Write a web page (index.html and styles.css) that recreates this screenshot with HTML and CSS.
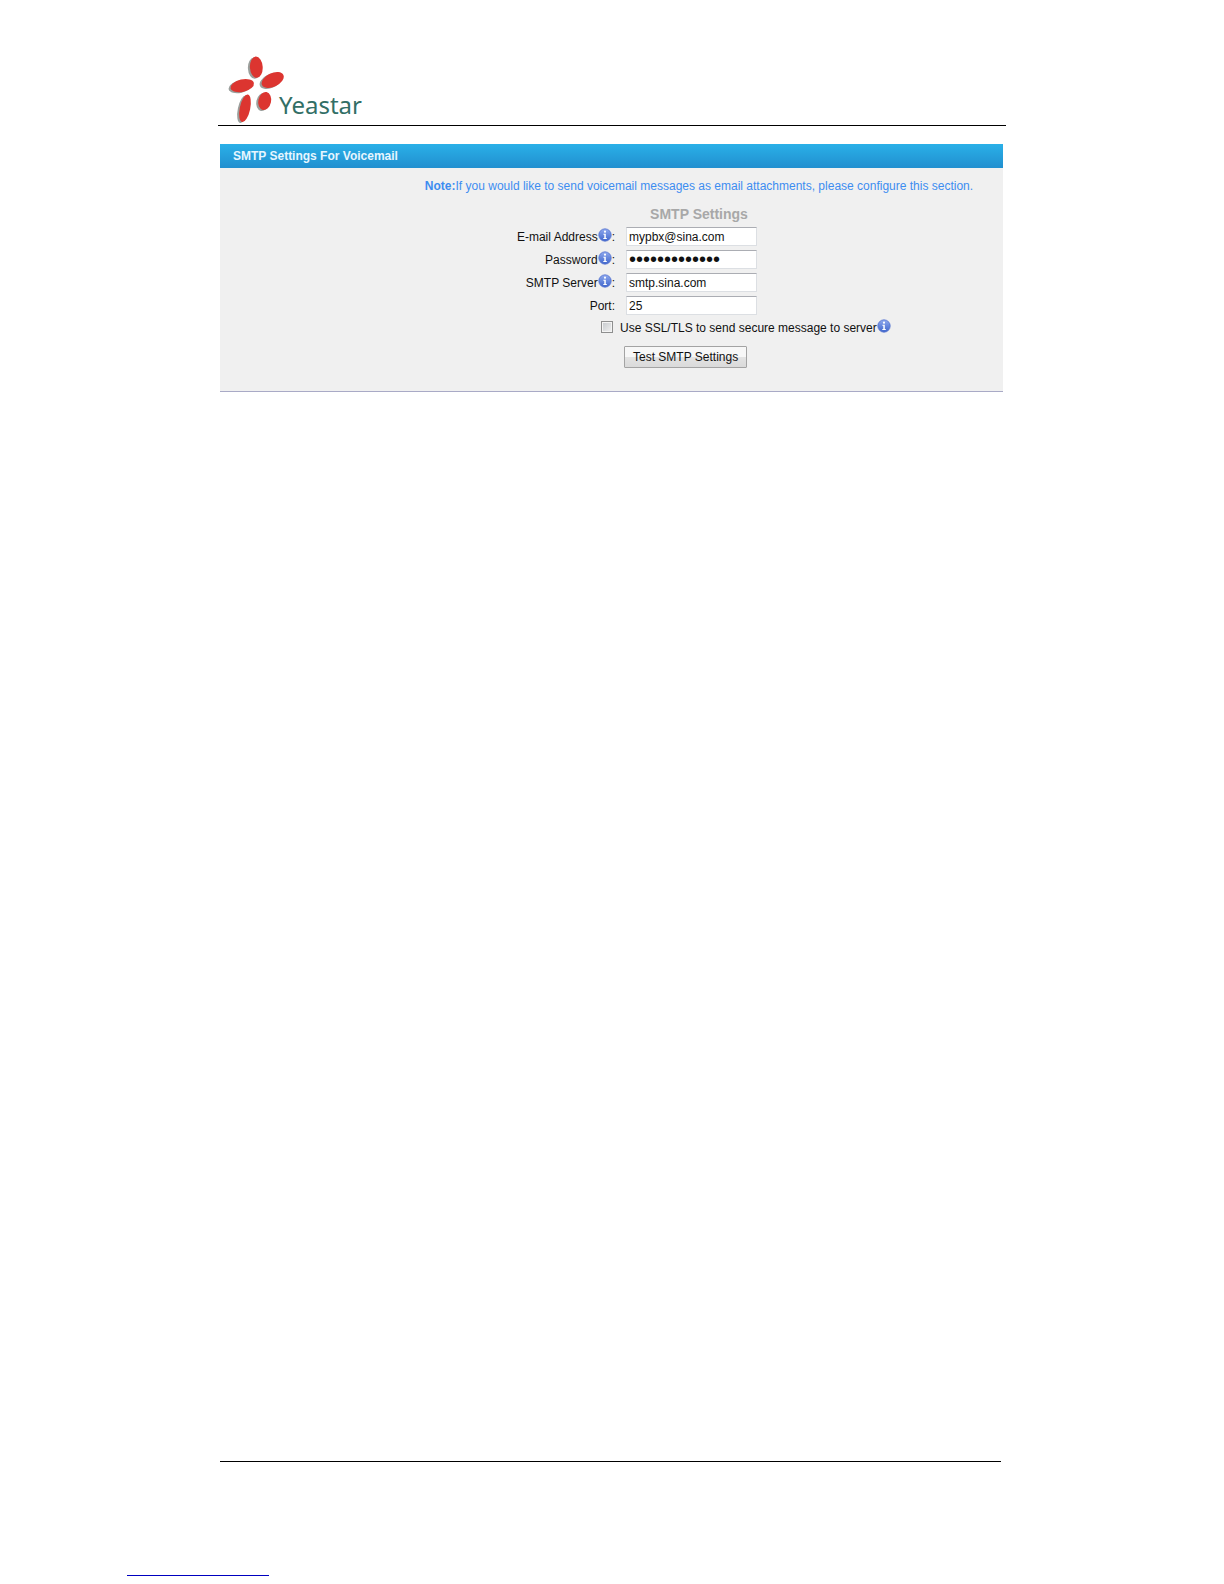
FILE: index.html
```
<!DOCTYPE html>
<html lang="en">
    <head>
        <meta charset="UTF-8">
        <title>SMTP Settings For Voicemail</title>
        <link rel="stylesheet" href="styles.css">
    </head>
    <body>
        <svg width="0" height="0" class="defs">
            <defs>
                <linearGradient id="infoFill" x1="0" y1="0" x2="0" y2="1">
                    <stop offset="0" stop-color="#8fa9ee"/>
                    <stop offset="1" stop-color="#3f66cc"/>
                </linearGradient>
                <symbol id="info" viewBox="0 0 14 14">
                    <circle cx="7" cy="7" r="6.2" fill="url(#infoFill)" stroke="#5875cf" stroke-width="0.8"/>
                    <circle cx="7" cy="3.7" r="1.1" fill="#fff"/>
                    <path d="M5.4 5.8h2.4v4.1h1v1H5.3v-1h1V6.8h-.9z" fill="#fff"/>
                </symbol>
                <g id="petals">
                    <ellipse cx="28.3" cy="12.2" rx="6.4" ry="10.6" transform="rotate(-3 28.3 12.2)"/>
                    <ellipse cx="14.3" cy="30.6" rx="11.9" ry="6.2" transform="rotate(-13 14.3 30.6)"/>
                    <ellipse cx="44.7" cy="25" rx="11.8" ry="6.8" transform="rotate(-25 44.7 25)"/>
                    <ellipse cx="17" cy="53.3" rx="5.2" ry="14" transform="rotate(12 17 53.3)"/>
                    <ellipse cx="36.7" cy="46" rx="6.4" ry="9.1" transform="rotate(12 36.7 46)"/>
                </g>
            </defs>
        </svg>
        <header class="header">
            <svg class="logo" width="58" height="70" viewBox="0 0 58 70">
                <use href="#petals" fill="#9a9f9c" x="-2" y="1"/>
                <use href="#petals" fill="#dc3530"/>
            </svg>
            <span class="brand">Yeastar</span>
        </header>
        <main class="panel">
            <h1 class="panelTitle">SMTP Settings For Voicemail</h1>
            <form class="panelBody">
                <p class="note"><b>Note:</b>If you would like to send voicemail messages as email attachments, please configure this section.</p>
                <h2 class="subtitle">SMTP Settings</h2>
                <div class="fields">
                    <label for="email">E-mail Address<svg class="info"><use href="#info"/></svg>:</label>
                    <input type="text" id="email" value="mypbx@sina.com">
                    <label for="password">Password<svg class="info"><use href="#info"/></svg>:</label>
                    <input type="password" id="password" value="abcdefghijklm">
                    <label for="server">SMTP Server<svg class="info"><use href="#info"/></svg>:</label>
                    <input type="text" id="server" value="smtp.sina.com">
                    <label for="port">Port:</label>
                    <input type="text" id="port" value="25">
                </div>
                <div class="secure">
                    <input type="checkbox" id="ssl">
                    <label for="ssl">Use SSL/TLS to send secure message to server<svg class="info"><use href="#info"/></svg></label>
                </div>
                <button type="button" class="test">Test SMTP Settings</button>
            </form>
        </main>
        <footer class="footer">
            <hr class="rule">
            <hr class="link">
        </footer>
    </body>
</html>
```
FILE: styles.css
```
* {
    box-sizing: border-box;
}
body {
    display: flex;
    flex-direction: column;
    min-height: 100vh;
    margin: 0;
    background: #fff;
    color: #111;
    font-family: "Liberation Sans", Arial, sans-serif;
    font-size: 12px;
}
.defs {
    position: absolute;
}
.header {
    display: flex;
    align-items: flex-end;
    margin: 0 218px;
    padding: 55px 0 0 10px;
    border-bottom: 1px solid #000;
}
.logo {
    display: block;
}
.brand {
    margin-left: -7px;
    padding-bottom: 4px;
    color: #326f66;
    font-family: "Noto Sans", sans-serif;
    font-size: 24px;
    font-weight: 400;
    line-height: 32px;
}
.panel {
    margin: 18px 221px 0 220px;
    background: #f0f0f0;
    border-bottom: 1px solid #a9aac6;
}
.panelTitle {
    margin: 0;
    padding-left: 13px;
    background: linear-gradient(#2ab0e8, #218fcf);
    color: #e6f6ff;
    font-size: 12px;
    line-height: 24px;
}
.panelBody {
    padding: 10px 0 23px 175px;
}
.note {
    margin: 0;
    color: #3d8df0;
    line-height: 16px;
    text-align: center;
}
.subtitle {
    margin: 11px 0 4px;
    color: #a8a8a8;
    font-size: 14px;
    line-height: 18px;
    text-align: center;
}
.fields {
    display: grid;
    grid-template-columns: 220px 1fr;
    column-gap: 11px;
    row-gap: 4px;
}
.fields label {
    line-height: 20px;
    height: 19px;
    text-align: right;
}
.fields input {
    width: 131px;
    height: 19px;
    padding: 0 2px;
    border: 1px solid #dcdfe3;
    border-top-color: #abadb3;
    background: #fff;
    color: #111;
    font: inherit;
}
.fields input[type=password] {
    font-size: 20px;
}
.info {
    width: 14px;
    height: 14px;
    vertical-align: -1px;
}
.secure {
    display: flex;
    align-items: center;
    margin: 3px 0 0 206px;
    line-height: 20px;
}
.secure input {
    appearance: none;
    width: 12px;
    height: 12px;
    margin: 0 7px 3px 0;
    border: 1px solid #8e8f8f;
    background: linear-gradient(135deg, #c4c8cc, #f2f2f2);
    box-shadow: inset 0 0 0 1px #f4f4f4;
}
.test {
    display: block;
    height: 22px;
    margin: 8px 0 0 229px;
    padding: 0 8px;
    border: 1px solid #a3a3a3;
    border-radius: 1px;
    background: linear-gradient(#f7f7f7 50%, #e3e3e3 50%, #dadada);
    color: #111;
    font: inherit;
}
.footer {
    margin-top: auto;
    padding-bottom: 8px;
}
.rule {
    margin: 0 223px 0 220px;
    border: 0;
    border-top: 1px solid #000;
}
.link {
    width: 142px;
    margin: 113px 0 0 127px;
    border: 0;
    border-top: 1px solid #0000c0;
}
```
